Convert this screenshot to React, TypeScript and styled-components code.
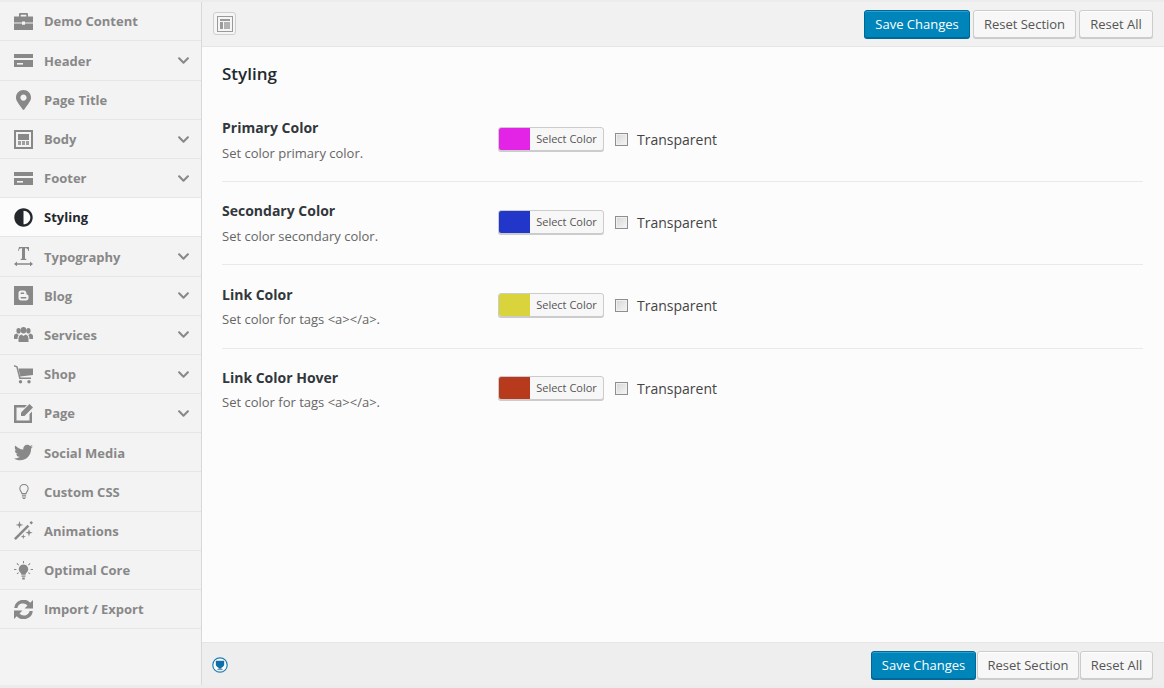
import React from "react";
import styled, { createGlobalStyle } from "styled-components";
import { FaAdjust, FaChevronDown, FaMapMarkerAlt, FaTwitter } from "react-icons/fa";

const GlobalStyle = createGlobalStyle`
  html, body {
    margin: 0;
    padding: 0;
    background: #ececec;
    font-family: "Open Sans", "Liberation Sans", sans-serif;
  }
  * { box-sizing: border-box; }
`;

const BriefcaseIcon = () => (
  <svg viewBox="0 0 19 17" width="19" height="17" fill="currentColor">
    <path fillRule="evenodd" d="M5 4V1.200C5 .5 5.500 0 6.200 0h6.600c.7 0 1.200.5 1.200 1.200V4h-1.700V1.700H6.700V4z" />
    <path d="M0 3.500h19V9.400h-8v-1H8v1H0zM0 10.600h8v1.200h3v-1.200h8V17H0z" />
  </svg>
);

const CardIcon = () => (
  <svg viewBox="0 0 19 13" width="19" height="13" fill="currentColor">
    <path d="M0 0h19v4H0zM0 6h19v7H0z" />
    <path d="M3 9h6v1.6H3z" fill="#f3f3f3" />
  </svg>
);

const BodyIcon = () => (
  <svg viewBox="0 0 19 19" width="19" height="19" fill="currentColor">
    <path fillRule="evenodd" d="M0 0h19v19H0zM2 2v15h15V2z" />
    <path d="M4 4h11v6H4z" />
    <path d="M4 11h3v4H4zM8 11h3v4H8zM12 11h3v4h-3z" opacity=".8" />
  </svg>
);

const TypographyIcon = () => (
  <svg viewBox="0 0 19 19" width="19" height="19" fill="currentColor">
    <path d="M4.500 0h10v4h-.8c-.2-1.800-.8-2.800-2.400-2.800h-.8v9.900c0 .8.300 1 1.400 1.100v.7H6.100v-.7c1.100-.1 1.400-.3 1.400-1.100V1.200h-.8C5.100 1.200 4.500 2.200 4.300 4h-.8z" transform="translate(.5 0)" />
    <path d="M0 17l3-2.400V16.300h13v-1.700l3 2.400-3 2.400v-1.700H3v1.700z" />
  </svg>
);

const BlogIcon = () => (
  <svg viewBox="0 0 19 19" width="19" height="19" fill="currentColor">
    <path
      fillRule="evenodd"
      d="M0 0h19v19H0zM7 4.500C5.500 4.500 4.500 5.500 4.500 7v5c0 1.500 1 2.500 2.500 2.500h5c1.500 0 2.500-1 2.500-2.500v-2c0-.8-.6-1.300-1.400-1.300-.4 0-.6-.3-.6-.7 0-2-1-3.500-2.500-3.500zM7.200 6.500h2.300c.5 0 .8.300.8.800s-.3.700-.8.700H7.200c-.5 0-.7-.3-.7-.7s.2-.8.7-.8zM7.200 11h4.600c.5 0 .7.300.7.700s-.2.800-.7.800H7.200c-.5 0-.7-.3-.7-.8s.2-.7.700-.7z"
    />
  </svg>
);

const UsersIcon = () => (
  <svg viewBox="0 0 19 15" width="19" height="15" fill="currentColor">
    <ellipse cx="9.500" cy="3.200" rx="2.800" ry="3.200" />
    <path d="M4.500 15v-3.500c0-2.300 1.500-3.500 3-4l2 1.500 2-1.500c1.500.5 3 1.700 3 4V15z" />
    <ellipse cx="4.600" cy="3.800" rx="2.200" ry="2.800" />
    <ellipse cx="14.400" cy="3.800" rx="2.200" ry="2.800" />
    <path d="M0 12v-2.500C0 8 1 7 2.500 6.600L4.600 8 5.500 7.500C4 8.500 3.500 10 3.500 12zM19 12v-2.500C19 8 18 7 16.500 6.600L14.400 8l-.9-.5c1.500 1 2 2.500 2 4.500z" />
  </svg>
);

const CartIcon = () => (
  <svg viewBox="0 0 19 19" width="19" height="19" fill="currentColor">
    <path d="M0 0l3.500 1.200 3 11.300h10.500v1.400H5.300L2.300 2.300 0 1.400z" />
    <path d="M4.500 3.500H19v6.600L6.300 11.500z" />
    <circle cx="6.500" cy="16.800" r="1.700" />
    <circle cx="15" cy="16.800" r="1.700" />
  </svg>
);

const PageIcon = () => (
  <svg viewBox="0 0 19 19" width="19" height="19" fill="currentColor">
    <path d="M0 1h13l-2.500 2.500H2.500v13h13v-6.500L18 7.500V19H0z" />
    <path d="M15.500 0L19 3.500l-8.500 8.500H7v-3.500z" />
  </svg>
);

const BulbOutlineIcon = () => (
  <svg viewBox="0 0 12 18" width="10" height="15" fill="none" stroke="currentColor" strokeWidth="1.300">
    <path d="M3.500 11.500C3 9 1 8.300 1 5.500a5 5 0 0 1 10 0c0 2.800-2 3.500-2.500 6z" />
    <path d="M3.500 13.500h5M3.500 15.500h5M4.500 17.300h3" />
  </svg>
);

const MagicIcon = () => (
  <svg viewBox="0 0 19 19" width="19" height="19" fill="currentColor">
    <path d="M0 17.200L13.500 3.700l1.800 1.800L1.800 19z" />
    <path d="M15.500 1.700L17.200 0 19 1.800 17.300 3.500z" />
    <path d="M5.500 0l.9 3 3 .9-3 .9-.9 3-.9-3-3-.9 3-.9zM15 8l.9 2.800 2.800.9-2.800.9-.9 2.900-.9-2.900-2.800-.9 2.800-.9zM9.300 13l.6 2 2 .6-2 .6-.6 2-.6-2-2-.6 2-.6z" />
  </svg>
);

const BulbRaysIcon = () => (
  <svg viewBox="0 0 19 19" width="19" height="19" fill="currentColor">
    <path d="M9.500 3.500a4.700 4.700 0 0 0-3 8.300c.7.600.9 1.200.9 1.900h4.200c0-.7.200-1.300.9-1.900a4.700 4.700 0 0 0-3-8.300zM7.500 14.500h4v1.300h-4zM8.200 16.500h2.600V18.500H8.200z" />
    <path d="M9 0h1v2.200H9zM3.200 2l1.800 1.700-.7.700-1.800-1.700zM15.800 2l.7.700-1.800 1.700-.7-.7zM0 8h2.400v1H0zM16.600 8H19v1h-2.400zM2.700 12.500l1.700-1.300.5.700-1.700 1.300zM16.300 12.500l-.5.700-1.700-1.300.5-.7z" />
  </svg>
);

const RefreshIcon = () => (
  <svg viewBox="0 0 19 19" width="19" height="19" fill="currentColor">
    <path d="M19 0v8.500h-8.500l3-3A5.800 5.800 0 0 0 3.400 8H.2A9.200 9.200 0 0 1 16.200 2.800z" />
    <path d="M0 19v-8.500h8.500l-3 3A5.800 5.800 0 0 0 15.600 11h3.200A9.200 9.200 0 0 1 2.800 16.200z" />
  </svg>
);

const LayoutIcon = () => (
  <svg viewBox="0 0 16 16" width="16" height="16">
    <path fill="#9a9a9a" fillRule="evenodd" d="M0 0h16v16H0zM1 1v14h14V1z" />
    <path fill="#9a9a9a" d="M3 3h10v2H3zM3 6h3v7H3z" />
    <path fill="#9a9a9a" opacity=".75" d="M7 6h6v7H7z" />
  </svg>
);

const ShieldBadge = () => (
  <svg viewBox="0 0 16 16" width="16" height="16">
    <circle cx="8" cy="8" r="7.200" fill="#fff" stroke="#1e7cb5" strokeWidth="1.200" />
    <path d="M3.800 3.800h8.400v3.700c0 1.600-1.600 2.700-2.800 3.200V11.800H6.600V10.700C5.400 10.200 3.800 9.100 3.800 7.500z" fill="#0f6ea8" />
    <path d="M5.300 11.800h5.400v1.400H5.300z" fill="#7d9cb0" />
  </svg>
);

const menu = [
  { label: "Demo Content", icon: <BriefcaseIcon /> },
  { label: "Header", icon: <CardIcon />, sub: true },
  { label: "Page Title", icon: <FaMapMarkerAlt size={20} /> },
  { label: "Body", icon: <BodyIcon />, sub: true },
  { label: "Footer", icon: <CardIcon />, sub: true },
  { label: "Styling", icon: <FaAdjust size={19} />, active: true },
  { label: "Typography", icon: <TypographyIcon />, sub: true },
  { label: "Blog", icon: <BlogIcon />, sub: true },
  { label: "Services", icon: <UsersIcon />, sub: true },
  { label: "Shop", icon: <CartIcon />, sub: true },
  { label: "Page", icon: <PageIcon />, sub: true },
  { label: "Social Media", icon: <FaTwitter size={19} /> },
  { label: "Custom CSS", icon: <BulbOutlineIcon /> },
  { label: "Animations", icon: <MagicIcon /> },
  { label: "Optimal Core", icon: <BulbRaysIcon /> },
  { label: "Import / Export", icon: <RefreshIcon /> },
];

const fields = [
  { title: "Primary Color", desc: "Set color primary color.", color: "#e324e6" },
  { title: "Secondary Color", desc: "Set color secondary color.", color: "#2237c9" },
  { title: "Link Color", desc: "Set color for tags <a></a>.", color: "#d9d33c" },
  { title: "Link Color Hover", desc: "Set color for tags <a></a>.", color: "#b63a1b" },
];

const Page = styled.div`
  height: 688px;
  width: 1164px;
  overflow: hidden;
  padding: 2px 0 3px;
  background: #ececec;
`;

const Shell = styled.div`
  display: flex;
  height: 100%;
`;

const Sidebar = styled.nav`
  width: 202px;
  flex: none;
  padding-top: 0.2px;
  background: #f3f3f3;
  border-right: 1px solid #d8d8d8;
`;

const MenuItem = styled.div<{ $active?: boolean }>`
  display: flex;
  align-items: center;
  height: 39.2px;
  padding: 0.4px 11px 0 14px;
  border-bottom: 1px solid #e6e6e6;
  background: ${(p) => (p.$active ? "#fcfcfc" : "transparent")};
  color: ${(p) => (p.$active ? "#23282d" : "#888")};
  font-size: 13px;
  font-weight: 700;
`;

const MenuIcon = styled.span`
  display: flex;
  align-items: center;
  justify-content: center;
  width: 19px;
  height: 20px;
  margin-right: 11px;
  flex: none;
`;

const MenuLabel = styled.span`
  flex: 1;
`;

const Main = styled.main`
  flex: 1;
  display: flex;
  flex-direction: column;
  background: #fcfcfc;
`;

const Bar = styled.div<{ $bottom?: boolean }>`
  display: flex;
  align-items: center;
  justify-content: space-between;
  height: ${(p) => (p.$bottom ? "43px" : "45px")};
  padding: ${(p) => (p.$bottom ? "1px 11px 0 10px" : "0 11px 1px 11px")};
  flex: none;
  background: ${(p) => (p.$bottom ? "#eeeeee" : "#f1f1f1")};
  border-style: solid;
  border-color: #e5e5e5;
  border-width: ${(p) => (p.$bottom ? "1px 0 0" : "0 0 1px")};
`;

const ExpandButton = styled.button`
  display: flex;
  align-items: center;
  justify-content: center;
  width: 23px;
  height: 23px;
  padding: 0;
  background: #f5f5f5;
  border: 1px solid #cfcfcf;
  border-radius: 3px;
`;

const BadgeWrap = styled.span`
  display: flex;
`;

const Actions = styled.div<{ $tight?: boolean }>`
  display: flex;
  gap: ${(p) => (p.$tight ? "1px" : "3px")};
`;

const Button = styled.button<{ $primary?: boolean; $width: number }>`
  width: ${(p) => p.$width}px;
  height: 28px;
  padding: 0;
  border-radius: 3px;
  border: 1px solid ${(p) => (p.$primary ? "#006799" : "#cccccc")};
  box-shadow: ${(p) => (p.$primary ? "inset 0 1px 0 #2a9fd0, 0 1px 0 #006799" : "inset 0 1px 0 #fff, 0 1px 0 #ccc")};
  background: ${(p) => (p.$primary ? "#0085ba" : "#f7f7f7")};
  color: ${(p) => (p.$primary ? "#fff" : "#555")};
  font-family: inherit;
  font-size: 13px;
  white-space: nowrap;
`;

const Content = styled.section`
  flex: 1;
  padding: 16px 21px 0 20px;
`;

const Title = styled.h2`
  margin: 0 0 11px;
  height: 25px;
  font-size: 17px;
  line-height: 21px;
  font-weight: 600;
  color: #23282d;
`;

const FieldRow = styled.div`
  display: flex;
  height: 83.2px;
  padding-top: 19.2px;
  border-bottom: 1px solid #e9e9e9;
  &:last-child {
    border-bottom: 0;
  }
`;

const FieldInfo = styled.div`
  width: 276px;
  flex: none;
`;

const FieldTitle = styled.div`
  font-size: 14px;
  line-height: 19px;
  font-weight: 700;
  color: #32373c;
`;

const FieldDesc = styled.div`
  margin-top: 6.5px;
  font-size: 13px;
  line-height: 18px;
  color: #666;
`;

const Controls = styled.div`
  display: flex;
  align-items: center;
  height: 24px;
  margin-top: 8.4px;
`;

const ColorButton = styled.div`
  display: flex;
  width: 106px;
  height: 24px;
  border: 1px solid #ccc;
  border-radius: 3px;
  box-shadow: 0 1px 0 #ccc;
  background: #f7f7f7;
  overflow: hidden;
`;

const Swatch = styled.span<{ $color: string }>`
  width: 31px;
  background: ${(p) => p.$color};
`;

const ColorLabel = styled.span`
  flex: 1;
  text-align: center;
  font-size: 11px;
  line-height: 21px;
  color: #555;
`;

const CheckLabel = styled.label`
  display: flex;
  align-items: center;
  margin-left: 11px;
  padding-top: 1.2px;
  font-size: 14px;
  color: #444;
`;

const CheckBox = styled.span`
  width: 13px;
  height: 13px;
  margin: 0 9px 0 0;
  background: linear-gradient(135deg, #d6d6d6, #f6f6f6);
  border: 1px solid #8e8e8e;
  box-shadow: inset 0 0 0 1px #f0f0f0;
`;

export default function App() {
  return (
    <>
      <GlobalStyle />
      <Page>
        <Shell>
          <Sidebar>
            {menu.map((item) => (
              <MenuItem key={item.label} $active={item.active}>
                <MenuIcon>{item.icon}</MenuIcon>
                <MenuLabel>{item.label}</MenuLabel>
                {item.sub && <FaChevronDown size={13} />}
              </MenuItem>
            ))}
          </Sidebar>
          <Main>
            <Bar>
              <ExpandButton>
                <LayoutIcon />
              </ExpandButton>
              <Actions>
                <Button $primary $width={106}>Save Changes</Button>
                <Button $width={103}>Reset Section</Button>
                <Button $width={74}>Reset All</Button>
              </Actions>
            </Bar>
            <Content>
              <Title>Styling</Title>
              {fields.map((f) => (
                <FieldRow key={f.title}>
                  <FieldInfo>
                    <FieldTitle>{f.title}</FieldTitle>
                    <FieldDesc>{f.desc}</FieldDesc>
                  </FieldInfo>
                  <Controls>
                    <ColorButton>
                      <Swatch $color={f.color} />
                      <ColorLabel>Select Color</ColorLabel>
                    </ColorButton>
                    <CheckLabel>
                      <CheckBox />
                      Transparent
                    </CheckLabel>
                  </Controls>
                </FieldRow>
              ))}
            </Content>
            <Bar $bottom>
              <BadgeWrap>
                <ShieldBadge />
              </BadgeWrap>
              <Actions $tight>
                <Button $primary $width={105}>Save Changes</Button>
                <Button $width={102}>Reset Section</Button>
                <Button $width={73}>Reset All</Button>
              </Actions>
            </Bar>
          </Main>
        </Shell>
      </Page>
    </>
  );
}
